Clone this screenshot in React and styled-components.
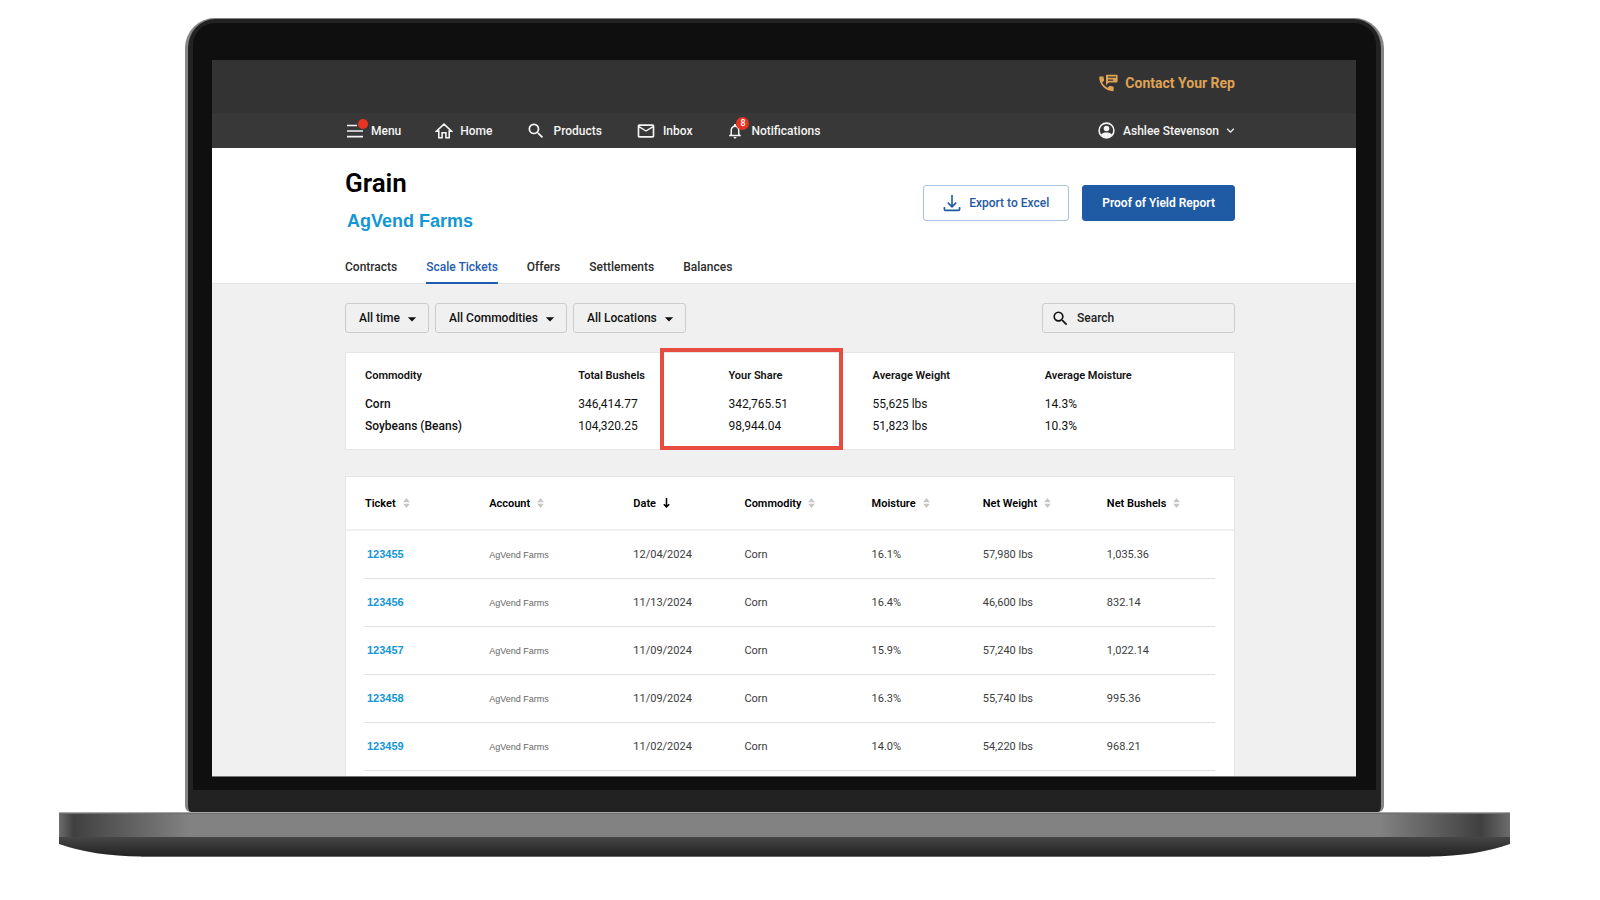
import React from 'react';
import styled, { createGlobalStyle } from 'styled-components';
import {
  MdSearch,
  MdMailOutline,
  MdNotificationsNone,
  MdKeyboardArrowDown,
  MdArrowDropDown,
} from 'react-icons/md';

const GlobalStyle = createGlobalStyle`
  * {
    box-sizing: border-box;
  }
  body {
    margin: 0;
    background: #fff;
    color: #111;
    font-family: Roboto, 'Liberation Sans', sans-serif;
    font-size: 12px;
  }
  a {
    color: inherit;
    text-decoration: none;
  }
  button, input, select {
    font: inherit;
    color: inherit;
  }
`;

/* ---------- laptop ---------- */

const Laptop = styled.div`
  padding: 18px 90px 0 59px;
`;

const Lid = styled.div`
  margin: 0 126px;
  padding: 4px 5px 22px;
  background: #222;
  border: solid #858585;
  border-width: 1px 3px 0;
  border-radius: 30px 30px 6px 6px;
`;

const Bezel = styled.div`
  padding: 37px 20px 13px 19px;
  background: #0f0f0f;
  border-radius: 22px 22px 0 0;
`;

const Screen = styled.div`
  background: #f0f0f0;
  border-bottom: 1px solid #777;
`;

const BaseSvg = styled.svg`
  display: block;
  width: 100%;
  height: 45px;
`;

/* ---------- top bars ---------- */

const TopBar = styled.div`
  display: flex;
  align-items: center;
  justify-content: flex-end;
  height: 53px;
  padding: 0 121px 8px 133px;
  background: #333;
`;

const ContactLink = styled.a`
  display: flex;
  align-items: center;
  gap: 7px;
  color: #dfa254;
  font-size: 14px;
  font-weight: 700;
`;

const NavBar = styled.div`
  display: flex;
  align-items: center;
  justify-content: space-between;
  height: 35px;
  padding: 0 121px 0 134px;
  background: #383838;
  color: #f4f4f4;
  font-weight: 500;
`;

const NavList = styled.nav`
  display: flex;
  align-items: center;
  gap: 34px;
`;

const NavLink = styled.a`
  display: flex;
  align-items: center;
  gap: 7px;
`;

const NavIcon = styled.span`
  position: relative;
  display: flex;
  font-size: ${(p) => p.$size || 18}px;
`;

const Dot = styled.span`
  position: absolute;
  top: -3px;
  right: -4px;
  width: 10px;
  height: 10px;
  border-radius: 50%;
  background: #e93323;
`;

const Badge = styled.span`
  position: absolute;
  top: -5px;
  right: -5px;
  width: 13px;
  height: 13px;
  border-radius: 50%;
  background: #e93323;
  color: #fff;
  font-size: 9px;
  line-height: 13px;
  text-align: center;
`;

const UserButton = styled.button`
  display: flex;
  align-items: center;
  gap: 8px;
  padding: 0;
  border: 0;
  background: none;
  font-weight: 500;
`;

const UserName = styled.span`
  display: flex;
  align-items: center;
  gap: 4px;
  margin-right: -3px;
  svg {
    font-size: 15px;
  }
`;

/* ---------- page header ---------- */

const PageHeader = styled.header`
  padding: 20px 121px 0 133px;
  background: #fff;
  border-bottom: 1px solid #e5e5e5;
`;

const HeaderRow = styled.div`
  display: flex;
  justify-content: space-between;
  align-items: flex-start;
`;

const Title = styled.h1`
  margin: 0;
  color: #000;
  font-size: 26px;
  line-height: 30px;
  font-weight: 600;
`;

const FarmName = styled.h2`
  margin: 11px 0 0 2px;
  color: #1497d4;
  font-family: 'Liberation Sans', Arial, sans-serif;
  font-size: 18px;
  line-height: 24px;
  font-weight: 700;
`;

const Actions = styled.div`
  display: flex;
  gap: 13px;
  margin-top: 17px;
`;

const ActionButton = styled.button`
  display: flex;
  align-items: center;
  gap: 8px;
  height: 36px;
  padding: 0 19px;
  border: 1px solid ${(p) => (p.$primary ? '#1f5aa5' : '#a9c2df')};
  border-radius: 3px;
  background: ${(p) => (p.$primary ? '#1f5aa5' : '#fff')};
  color: ${(p) => (p.$primary ? '#fff' : '#1f5aa5')};
  font-weight: ${(p) => (p.$primary ? 600 : 500)};
`;

const Tabs = styled.nav`
  display: flex;
  gap: 29px;
  margin: 26px 0 -1px;
`;

const Tab = styled.a`
  padding-bottom: 7px;
  border-bottom: 2px solid ${(p) => (p.$active ? '#1f5bb0' : 'transparent')};
  color: ${(p) => (p.$active ? '#1f5bb0' : '#2b2b2b')};
  font-weight: 500;
  line-height: 16px;
`;

/* ---------- content ---------- */

const Content = styled.main`
  padding: 19px 121px 0 133px;
`;

const Toolbar = styled.div`
  display: flex;
  justify-content: space-between;
`;

const Filters = styled.div`
  display: flex;
  gap: 6px;
`;

const SelectWrap = styled.label`
  position: relative;
  display: flex;
  svg {
    position: absolute;
    top: 6px;
    right: 7px;
    font-size: 20px;
    pointer-events: none;
  }
`;

const Select = styled.select`
  appearance: none;
  height: 30px;
  padding: 0 28px 0 13px;
  border: 1px solid #ccc;
  border-radius: 3px;
  background: transparent;
  font-weight: 500;
`;

const SearchBox = styled.label`
  display: flex;
  align-items: center;
  gap: 7px;
  width: 193px;
  height: 30px;
  padding: 0 8px;
  border: 1px solid #ccc;
  border-radius: 3px;
  svg {
    flex: none;
    font-size: 19px;
  }
`;

const SearchInput = styled.input`
  flex: 1;
  min-width: 0;
  padding: 0;
  border: 0;
  outline: 0;
  background: transparent;
  font-weight: 500;
  &::placeholder {
    color: #222;
    opacity: 1;
  }
`;

const Card = styled.section`
  position: relative;
  background: #fff;
  border: 1px solid #e5e5e5;
`;

const SummaryCard = styled(Card)`
  margin-top: 19px;
  padding: 12px 19px;
`;

const TicketsCard = styled(Card)`
  margin-top: 26px;
  padding-bottom: 5px;
  border-bottom: 0;
`;

const Table = styled.table`
  display: block;
  width: 100%;
  thead, tbody {
    display: block;
  }
  th, td {
    padding: 0;
    text-align: left;
    white-space: nowrap;
  }
`;

const SummaryRow = styled.tr`
  display: grid;
  grid-template-columns: 213fr 150fr 144fr 172fr 170fr;
  line-height: 22px;
  th {
    font-weight: 500;
  }
  thead & {
    padding-bottom: 6px;
    th {
      font-size: 11px;
      font-weight: 600;
    }
  }
`;

const Highlight = styled.div`
  position: absolute;
  top: -5px;
  left: 35.4%;
  width: 183px;
  height: 102px;
  border: 4px solid #e74c40;
  pointer-events: none;
`;

const TicketRow = styled.tr`
  display: grid;
  grid-template-columns: 124fr 144fr 111fr 127fr 111fr 124fr 108fr;
  align-items: center;
  height: 48px;
  margin: 0 19px;
  border-bottom: 1px solid #dedede;
  color: #3c3c3c;
  font-size: 11px;
  thead & {
    height: 54px;
    margin: 0;
    padding: 0 19px;
    border-bottom: 2px solid #f0f0f0;
    color: #000;
  }
`;

const SortButton = styled.button`
  display: flex;
  align-items: center;
  gap: 7px;
  padding: 0;
  border: 0;
  background: none;
  font-weight: 600;
`;

const TicketLink = styled.a`
  padding-left: 2px;
  color: #1497d4;
  font-family: 'Liberation Sans', Arial, sans-serif;
  font-weight: 700;
`;

const Account = styled.td`
  color: #666;
  font-family: 'Liberation Sans', Arial, sans-serif;
  font-size: 9px;
`;

/* ---------- icons ---------- */

const ContactIcon = () => (
  <svg width="19" height="18" viewBox="0 0 19 18" fill="currentColor">
    <path d="M.7 2.600h3.700l.8 3.800-2 2c1.200 2.300 3 4.100 5.400 5.400l2.100-2 4 .9v3.700c0 .5-.3.800-.8.800C6.700 17.200.2 10.600.2 3.300c0-.4.200-.7.500-.7z" />
    <path fillRule="evenodd" d="M7.600.8h10.200q.8 0 .8.800v6q0 .8-.8.800H9.700L7 11.200V1.500q0-.7.600-.7zM9 2.500v1.300h8V2.500zm0 3v1.300h5.200V5.500z" />
  </svg>
);

const MenuIcon = () => (
  <svg width="18" height="18" viewBox="0 0 18 18" stroke="currentColor" strokeWidth="1.6">
    <path d="M1 3.5h10M1 9h16M1 14.6h16" />
  </svg>
);

const HomeIcon = () => (
  <svg width="18" height="18" viewBox="0 0 18 18" fill="none" stroke="currentColor" strokeWidth="1.6">
    <path d="M1.500 9.100h2.300v6.600h3.300v-5h3.800v5h3.300V9.100h2.300L9 2.200z" />
  </svg>
);

const UserIcon = () => (
  <svg width="17" height="17" viewBox="0 0 17 17">
    <circle cx="8.5" cy="8.5" r="7.4" fill="none" stroke="currentColor" strokeWidth="1.6" />
    <circle cx="8.5" cy="6.5" r="2.8" fill="currentColor" />
    <path d="M2.8 12.7c1.4-1.6 3.4-2.2 5.7-2.2s4.3.6 5.7 2.2c-1.3 2-3.4 3.2-5.7 3.2s-4.4-1.2-5.7-3.2z" fill="currentColor" />
  </svg>
);

const DownloadIcon = () => (
  <svg width="18" height="18" viewBox="0 0 18 18" fill="none" stroke="currentColor" strokeWidth="1.6">
    <path d="M9 1v11.6M4.8 8.6L9 12.8l4.2-4.2M1.4 13v2.4q0 1 1 1h13.2q1 0 1-1V13" />
  </svg>
);

const SortIcon = () => (
  <svg width="7" height="10" viewBox="0 0 7 10" fill="#c6c6c6">
    <path d="M3.5 0L6.8 4.2H.2zM3.5 10L.2 5.8h6.6z" />
  </svg>
);

const SortedDownIcon = () => (
  <svg width="7" height="10" viewBox="0 0 7 10" fill="none" stroke="#000" strokeWidth="1.5">
    <path d="M3.5 0v9M.8 6.2l2.7 2.7 2.7-2.7" />
  </svg>
);

const LaptopBase = () => (
  <BaseSvg viewBox="0 0 1451 45" preserveAspectRatio="none">
    <defs>
      <linearGradient id="deck">
        <stop offset="0" stopColor="#6c6c6c" />
        <stop offset="0.01" stopColor="#404040" />
        <stop offset="0.09" stopColor="#828282" />
        <stop offset="0.91" stopColor="#828282" />
        <stop offset="0.98" stopColor="#404040" />
        <stop offset="1" stopColor="#6c6c6c" />
      </linearGradient>
      <linearGradient id="under" x2="0" y2="1">
        <stop offset="0" stopColor="#464646" />
        <stop offset="1" stopColor="#222" />
      </linearGradient>
    </defs>
    <rect width="1451" height="26" fill="url(#deck)" />
    <rect width="1451" height="1" fill="#a8a8a8" />
    <rect y="1" width="1451" height="1" fill="#6f6f6f" />
    <path d="M0 25h1451v7q-34 12-80 12.500H82Q34 44 0 32z" fill="url(#under)" />
    <path d="M82 44.500h1289" stroke="#666" />
  </BaseSvg>
);

/* ---------- data ---------- */

const tabs = ['Contracts', 'Scale Tickets', 'Offers', 'Settlements', 'Balances'];

const filters = [
  { label: 'Period', value: 'All time' },
  { label: 'Commodity', value: 'All Commodities' },
  { label: 'Location', value: 'All Locations' },
];

const summary = [
  ['Corn', '346,414.77', '342,765.51', '55,625 lbs', '14.3%'],
  ['Soybeans (Beans)', '104,320.25', '98,944.04', '51,823 lbs', '10.3%'],
];

const columns = ['Ticket', 'Account', 'Date', 'Commodity', 'Moisture', 'Net Weight', 'Net Bushels'];

const tickets = [
  { id: '123455', date: '12/04/2024', moisture: '16.1%', weight: '57,980 lbs', bushels: '1,035.36' },
  { id: '123456', date: '11/13/2024', moisture: '16.4%', weight: '46,600 lbs', bushels: '832.14' },
  { id: '123457', date: '11/09/2024', moisture: '15.9%', weight: '57,240 lbs', bushels: '1,022.14' },
  { id: '123458', date: '11/09/2024', moisture: '16.3%', weight: '55,740 lbs', bushels: '995.36' },
  { id: '123459', date: '11/02/2024', moisture: '14.0%', weight: '54,220 lbs', bushels: '968.21' },
];

export default function App() {
  return (
    <Laptop>
      <GlobalStyle />
      <Lid>
        <Bezel>
          <Screen>
            <TopBar>
              <ContactLink href="#contact"><ContactIcon /> Contact Your Rep</ContactLink>
            </TopBar>
            <NavBar>
              <NavList>
                <NavLink href="#menu"><NavIcon><MenuIcon /><Dot /></NavIcon>Menu</NavLink>
                <NavLink href="#home"><NavIcon><HomeIcon /></NavIcon>Home</NavLink>
                <NavLink href="#products"><NavIcon $size={20}><MdSearch /></NavIcon>Products</NavLink>
                <NavLink href="#inbox"><NavIcon $size={20}><MdMailOutline /></NavIcon>Inbox</NavLink>
                <NavLink href="#notifications">
                  <NavIcon><MdNotificationsNone /><Badge>8</Badge></NavIcon>Notifications
                </NavLink>
              </NavList>
              <UserButton>
                <UserIcon />
                <UserName>Ashlee Stevenson <MdKeyboardArrowDown /></UserName>
              </UserButton>
            </NavBar>

            <PageHeader>
              <HeaderRow>
                <div>
                  <Title>Grain</Title>
                  <FarmName>AgVend Farms</FarmName>
                </div>
                <Actions>
                  <ActionButton><DownloadIcon /> Export to Excel</ActionButton>
                  <ActionButton $primary>Proof of Yield Report</ActionButton>
                </Actions>
              </HeaderRow>
              <Tabs>
                {tabs.map((tab) => (
                  <Tab key={tab} href="#tab" $active={tab === 'Scale Tickets'}>{tab}</Tab>
                ))}
              </Tabs>
            </PageHeader>

            <Content>
              <Toolbar>
                <Filters>
                  {filters.map((f) => (
                    <SelectWrap key={f.label}>
                      <Select aria-label={f.label}>
                        <option>{f.value}</option>
                      </Select>
                      <MdArrowDropDown />
                    </SelectWrap>
                  ))}
                </Filters>
                <SearchBox>
                  <MdSearch />
                  <SearchInput type="text" placeholder="Search" aria-label="Search" />
                </SearchBox>
              </Toolbar>

              <SummaryCard>
                <Table>
                  <thead>
                    <SummaryRow>
                      <th>Commodity</th>
                      <th>Total Bushels</th>
                      <th>Your Share</th>
                      <th>Average Weight</th>
                      <th>Average Moisture</th>
                    </SummaryRow>
                  </thead>
                  <tbody>
                    {summary.map(([name, ...values]) => (
                      <SummaryRow key={name}>
                        <th scope="row">{name}</th>
                        {values.map((v) => <td key={v}>{v}</td>)}
                      </SummaryRow>
                    ))}
                  </tbody>
                </Table>
                <Highlight />
              </SummaryCard>

              <TicketsCard>
                <Table>
                  <thead>
                    <TicketRow>
                      {columns.map((c) => (
                        <th key={c}>
                          <SortButton>{c} {c === 'Date' ? <SortedDownIcon /> : <SortIcon />}</SortButton>
                        </th>
                      ))}
                    </TicketRow>
                  </thead>
                  <tbody>
                    {tickets.map((t) => (
                      <TicketRow key={t.id}>
                        <td><TicketLink href="#ticket">{t.id}</TicketLink></td>
                        <Account>AgVend Farms</Account>
                        <td>{t.date}</td>
                        <td>Corn</td>
                        <td>{t.moisture}</td>
                        <td>{t.weight}</td>
                        <td>{t.bushels}</td>
                      </TicketRow>
                    ))}
                  </tbody>
                </Table>
              </TicketsCard>
            </Content>
          </Screen>
        </Bezel>
      </Lid>
      <LaptopBase />
    </Laptop>
  );
}
